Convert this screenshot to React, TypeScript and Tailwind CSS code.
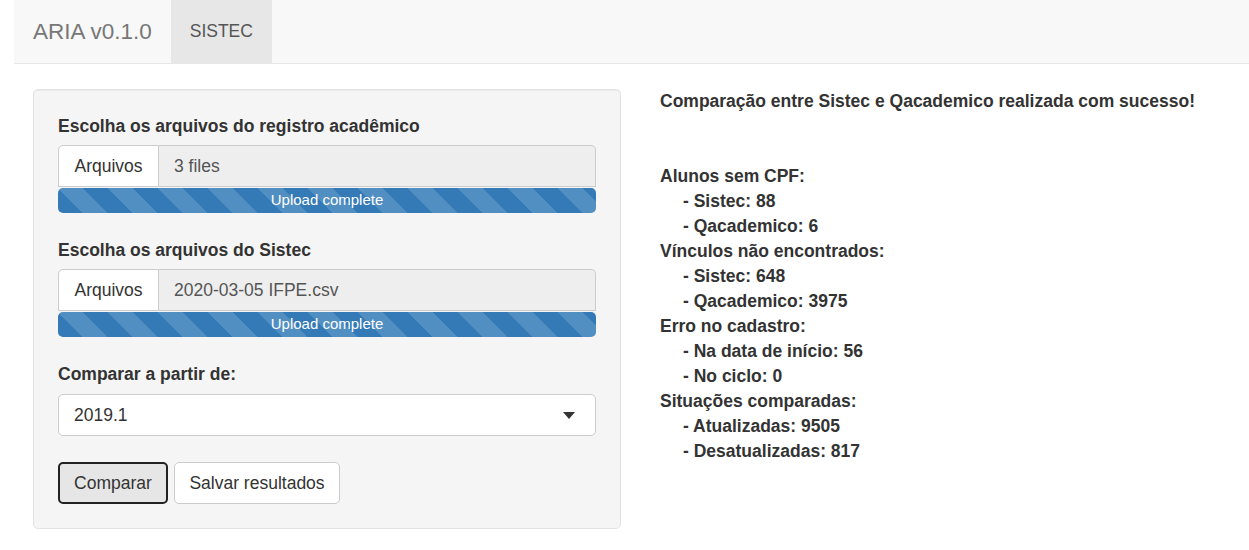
import React from "react";

const stripe =
  "bg-[#337ab7] bg-[linear-gradient(45deg,rgba(255,255,255,.15)_25%,transparent_25%,transparent_50%,rgba(255,255,255,.15)_50%,rgba(255,255,255,.15)_75%,transparent_75%,transparent)] bg-[length:50px_50px]";

function FileInput({ label, value }: { label: string; value: string }) {
  return (
    <div>
      <div className="h-[25px] leading-[25px] font-bold text-[17.5px] text-[#333]">{label}</div>
      <div className="mt-[6px] flex h-[42px]">
        <div className="w-[101px] flex items-center justify-center bg-white border border-[#ccc] rounded-tl-[5px] text-[17.5px] text-[#333]">
          Arquivos
        </div>
        <div className="flex-1 flex items-center pl-[15px] bg-[#eee] border border-l-0 border-[#ccc] rounded-tr-[5px] text-[17.5px] text-[#555]">
          {value}
        </div>
      </div>
      <div
        className={`mt-[1px] h-[25px] rounded-[5px] flex items-center justify-center text-white text-[15px] ${stripe}`}
      >
        Upload complete
      </div>
    </div>
  );
}

function Sub({ children }: { children: React.ReactNode }) {
  return <div className="pl-[23px]">{children}</div>;
}

export default function App() {
  return (
    <div
      className="min-h-[550px] bg-white pl-[14px] text-[#333]"
      style={{ fontFamily: '"Liberation Sans", Arial, sans-serif' }}
    >
      <div className="h-[64px] bg-[#f8f8f8] border-b border-[#e7e7e7] flex">
        <div className="px-[19px] flex items-center text-[22.5px] text-[#777]">ARIA v0.1.0</div>
        <div className="w-[101px] bg-[#e7e7e7] flex items-center justify-center text-[17.5px] text-[#555]">
          SISTEC
        </div>
      </div>
      <div className="flex mt-[25px]">
        <div className="pl-[19px]">
          <div className="w-[588px] bg-[#f5f5f5] border border-[#e3e3e3] rounded-[5px] px-[24px] pt-[24px] pb-[24px] shadow-[inset_0_1px_1px_rgba(0,0,0,0.05)]">
            <FileInput label="Escolha os arquivos do registro acadêmico" value="3 files" />
            <div className="mt-[25px]">
              <FileInput label="Escolha os arquivos do Sistec" value="2020-03-05 IFPE.csv" />
            </div>
            <div className="mt-[25px]">
              <div className="h-[25px] leading-[25px] font-bold text-[17.5px]">Comparar a partir de:</div>
              <div className="mt-[7px] h-[42px] bg-white border border-[#ccc] rounded-[5px] flex items-center justify-between pl-[15px] pr-[20px] text-[17.5px] text-[#333]">
                <span>2019.1</span>
                <span className="w-0 h-0 border-l-[6px] border-r-[6px] border-t-[7px] border-l-transparent border-r-transparent border-t-[#333]" />
              </div>
            </div>
            <div className="mt-[26px] flex gap-[6px]">
              <div className="w-[110px] h-[42px] flex items-center justify-center bg-[#e6e6e6] border-2 border-[#222] rounded-[5px] text-[17.5px] text-[#333]">
                Comparar
              </div>
              <div className="w-[166px] h-[42px] flex items-center justify-center bg-white border border-[#ccc] rounded-[5px] text-[17.5px] text-[#333]">
                Salvar resultados
              </div>
            </div>
          </div>
        </div>
        <div className="ml-[39px] font-bold text-[17.5px] leading-[25px] text-[#333]">
          <div>Comparação entre Sistec e Qacademico realizada com sucesso!</div>
          <div className="h-[50px]" />
          <div>Alunos sem CPF:</div>
          <Sub>- Sistec: 88</Sub>
          <Sub>- Qacademico: 6</Sub>
          <div>Vínculos não encontrados:</div>
          <Sub>- Sistec: 648</Sub>
          <Sub>- Qacademico: 3975</Sub>
          <div>Erro no cadastro:</div>
          <Sub>- Na data de início: 56</Sub>
          <Sub>- No ciclo: 0</Sub>
          <div>Situações comparadas:</div>
          <Sub>- Atualizadas: 9505</Sub>
          <Sub>- Desatualizadas: 817</Sub>
        </div>
      </div>
    </div>
  );
}
